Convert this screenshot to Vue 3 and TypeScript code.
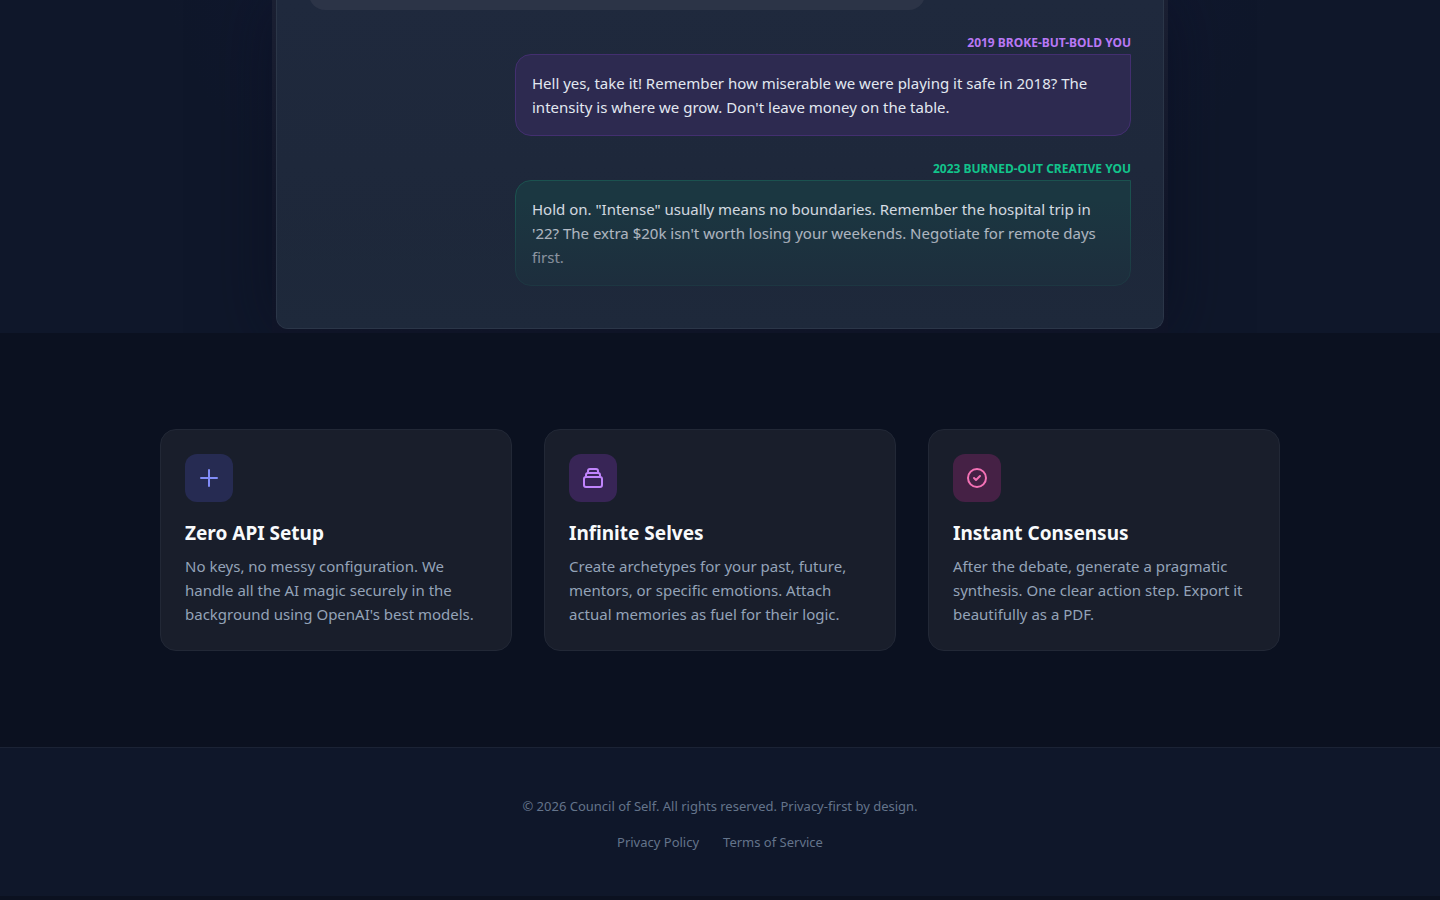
<script setup lang="ts">
interface Message { who: string; text: string; tone: string }
interface Feature { title: string; text: string; icon: string; tone: string }

const messages: Message[] = [
  {
    who: '2019 Broke-But-Bold You',
    text: 'Hell yes, take it! Remember how miserable we were playing it safe in 2018? The intensity is where we grow. Don\'t leave money on the table.',
    tone: 'purple',
  },
  {
    who: '2023 Burned-Out Creative You',
    text: 'Hold on. "Intense" usually means no boundaries. Remember the hospital trip in \'22? The extra $20k isn\'t worth losing your weekends. Negotiate for remote days first.',
    tone: 'emerald',
  },
]

const features: Feature[] = [
  {
    title: 'Zero API Setup',
    text: 'No keys, no messy configuration. We handle all the AI magic securely in the background using OpenAI\'s best models.',
    icon: 'M12 4v16m8-8H4',
    tone: 'indigo',
  },
  {
    title: 'Infinite Selves',
    text: 'Create archetypes for your past, future, mentors, or specific emotions. Attach actual memories as fuel for their logic.',
    icon: 'M19 11H5m14 0a2 2 0 012 2v6a2 2 0 01-2 2H5a2 2 0 01-2-2v-6a2 2 0 012-2m14 0V9a2 2 0 00-2-2M5 11V9a2 2 0 012-2m0 0V5a2 2 0 012-2h6a2 2 0 012 2v2M7 7h10',
    tone: 'violet',
  },
  {
    title: 'Instant Consensus',
    text: 'After the debate, generate a pragmatic synthesis. One clear action step. Export it beautifully as a PDF.',
    icon: 'M9 12l2 2 4-4m6 2a9 9 0 11-18 0 9 9 0 0118 0z',
    tone: 'pink',
  },
]
</script>

<template>
  <div class="page">
    <section class="hero">
      <div class="frame">
        <div class="chat">
          <div class="opening"></div>
          <div v-for="m in messages" :key="m.who" class="message" :class="m.tone">
            <span class="who">{{ m.who }}</span>
            <p class="bubble">{{ m.text }}</p>
          </div>
          <div class="fade"></div>
        </div>
      </div>
    </section>

    <section class="features">
      <div class="grid">
        <article v-for="f in features" :key="f.title" class="card">
          <div class="icon" :class="f.tone">
            <svg viewBox="0 0 24 24" width="24" height="24" fill="none" stroke="currentColor" stroke-width="2" stroke-linecap="round" stroke-linejoin="round" aria-hidden="true">
              <path :d="f.icon" />
            </svg>
          </div>
          <h3>{{ f.title }}</h3>
          <p>{{ f.text }}</p>
        </article>
      </div>
    </section>

    <footer class="footer">
      <p>© 2026 Council of Self. All rights reserved. Privacy-first by design.</p>
      <nav>
        <a href="#privacy">Privacy Policy</a>
        <a href="#terms">Terms of Service</a>
      </nav>
    </footer>
  </div>
</template>

<style>
body {
  margin: 0;
  background: #0b1120;
}
</style>

<style scoped>
.page {
  font-family: "Segoe UI", "Noto Sans", "Open Sans", sans-serif;
  font-size: 15px;
  line-height: 24px;
  color: #f8fafc;
}
.page *, .page {
  box-sizing: border-box;
}
h3, p {
  margin: 0;
}
.hero {
  overflow: hidden;
  background: radial-gradient(ellipse 560px 400px at 50% -60px, #14193c 0%, #0f172a 100%);
}
.frame {
  max-width: 896px;
  margin: 0 auto;
  padding: 0 4px 4px;
  background: linear-gradient(to bottom, #1a1f32 0%, #101528 70%, #0f1427 100%);
  box-shadow: 0 0 60px rgba(8, 12, 30, 0.5);
}
.chat {
  position: relative;
  display: flex;
  flex-direction: column;
  gap: 24px;
  padding: 0 32px 42px;
  border: 1px solid #2b3648;
  border-top: 0;
  border-radius: 0 0 12px 12px;
  background: linear-gradient(to bottom, #1f293d, #1d2739);
}
/* The earlier message runs up past the top edge of the section. */
.opening {
  width: 616px;
  max-width: 75%;
  height: 40px;
  margin-top: -30px;
  border-radius: 16px;
  background: #2c3447;
}
.message {
  display: flex;
  flex-direction: column;
  align-items: flex-end;
}
.who {
  font-size: 12px;
  line-height: 18px;
  padding-bottom: 2px;
  font-weight: 700;
  text-transform: uppercase;
}
.bubble {
  width: 616px;
  max-width: 75%;
  padding: 16px;
  border: 1px solid;
  border-radius: 16px 0 16px 16px;
  color: #e2e8f0;
}
.purple .who { color: #b978f5; }
.purple .bubble {
  border-color: #432f70;
  background: #2d2a50;
}
.emerald .who { color: #12c48b; }
.emerald .bubble {
  border-color: #1b524f;
  background: #1b3741;
}
.fade {
  position: absolute;
  inset: auto 0 0;
  height: 128px;
  border-radius: 0 0 11px 11px;
  background: linear-gradient(to top, #1e293b, transparent);
}
.features {
  padding: 96px 24px;
  background: #0b1120;
}
.grid {
  display: grid;
  grid-template-columns: repeat(3, 1fr);
  gap: 32px;
  max-width: 1120px;
  margin: 0 auto;
}
.card {
  padding: 24px;
  border: 1px solid #222836;
  border-radius: 16px;
  background: #191e2b;
}
.icon {
  display: grid;
  place-items: center;
  width: 48px;
  height: 48px;
  margin-bottom: 16px;
  border-radius: 12px;
}
.indigo { background: #262b52; color: #818cf8; }
.violet { background: #382556; color: #c084fc; }
.pink { background: #452145; color: #f472b6; }
.card h3 {
  margin-bottom: 6px;
  font-size: 19px;
  line-height: 30px;
  font-weight: 700;
}
.card p {
  color: #94a3b8;
}
.footer {
  padding: 48px 24px 44px;
  border-top: 1px solid #1b2335;
  background: #0f172a;
  text-align: center;
  font-size: 13px;
  line-height: 20px;
  color: #64748b;
}
.footer nav {
  display: flex;
  justify-content: center;
  gap: 24px;
  margin-top: 16px;
}
.footer a {
  color: inherit;
  text-decoration: none;
}
</style>
